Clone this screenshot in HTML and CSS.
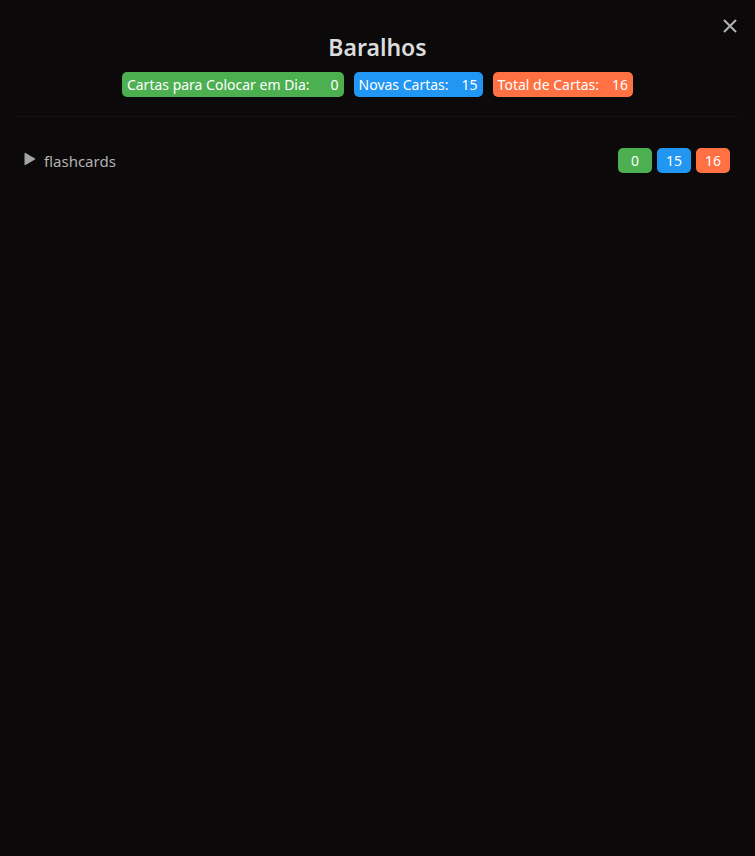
FILE: index.html
```html
<!DOCTYPE html>
<html lang="pt-BR">
<head>
<meta charset="utf-8">
<title>Baralhos</title>
<link rel="stylesheet" href="styles.css">
</head>
<body>
<main class="modal">
  <button class="close" type="button" aria-label="Fechar">
    <svg width="18" height="18" viewBox="0 0 18 18"><path d="M3 3l12 12M15 3L3 15"/></svg>
  </button>
  <header class="header">
    <h1 class="title">Baralhos</h1>
    <div class="stats">
      <div class="badge due"><span>Cartas para Colocar em Dia:</span><span class="total">0</span></div>
      <div class="badge new"><span>Novas Cartas:</span><span class="total">15</span></div>
      <div class="badge all"><span>Total de Cartas:</span><span class="total">16</span></div>
    </div>
  </header>
  <section class="decks">
    <div class="deck">
      <button class="toggle" type="button" aria-label="Expandir">
        <svg width="12" height="14" viewBox="0 0 12 14"><path d="M1.2 1.5v11L10.6 7z"/></svg>
      </button>
      <a class="name" href="#">flashcards</a>
      <div class="counts">
        <span class="badge count due">0</span>
        <span class="badge count new">15</span>
        <span class="badge count all">16</span>
      </div>
    </div>
  </section>
</main>
</body>
</html>
```
FILE: styles.css
```css
* { box-sizing: border-box; }
body {
  margin: 0;
  min-height: 100vh;
  background: #0b090a;
  color: #b3b3b3;
  font: 15px/20px "Segoe UI", "Noto Sans", "Open Sans", sans-serif;
}
.modal { position: relative; padding: 32px 15px; }
button { padding: 0; border: 0; background: none; color: inherit; }
svg { display: block; }
.close { position: absolute; top: 17px; right: 16px; }
.close svg { fill: none; stroke: #b3b3b3; stroke-width: 2; }
.header { padding-bottom: 19px; border-bottom: 1px solid #160e10; }
.title {
  margin: 0 0 10px;
  color: #dcdcdc;
  font-size: 23px;
  line-height: 30px;
  font-weight: 600;
  text-align: center;
}
.stats { display: flex; justify-content: center; gap: 10px; }
.badge {
  display: flex;
  gap: 13px;
  height: 25px;
  padding: 0 5px;
  border-radius: 5px;
  color: #fff;
  font-size: 14px;
  line-height: 25px;
  white-space: nowrap;
}
.total { min-width: 16px; text-align: right; }
.due { background: #4caf50; }
.new { background: #2196f3; }
.all { background: #ff7043; }
.decks { padding: 31px 10px 0 9px; }
.deck { display: flex; align-items: center; }
.toggle { margin: 0 8px 4px 0; }
.toggle svg { fill: #a6a6a6; stroke: #a6a6a6; stroke-width: 1.4; stroke-linejoin: round; }
.name { flex: 1; color: inherit; text-decoration: none; }
.counts { display: flex; gap: 5px; }
.count { justify-content: center; width: 34px; }
```
